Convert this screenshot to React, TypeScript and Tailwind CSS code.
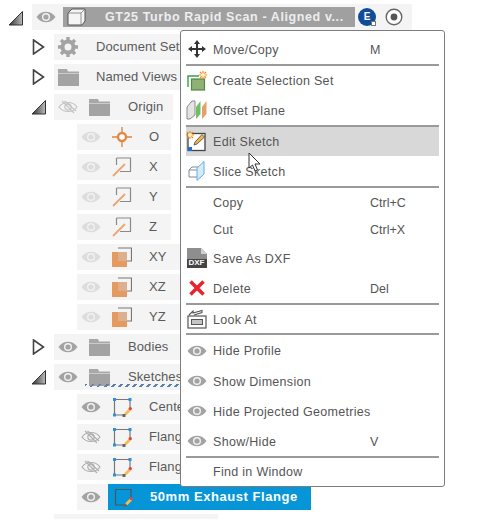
import React from "react";

const Eye = ({ c = "#a3a3a3", off = false, w = 20 }: { c?: string; off?: boolean; w?: number }) => (
  <svg width={w} height="14" viewBox="0 0 20 14" className="shrink-0">
    {off ? (
      <g fill="none" stroke={c} strokeWidth="1.2">
        <path d="M1 7 C5 1 15 1 19 7 C15 13 5 13 1 7Z" />
        <circle cx="10" cy="7" r="3.2" />
        <path d="M4 1 L16 13 M6.5 1 L18 11" />
      </g>
    ) : (
      <g>
        <path d="M0.5 7 C5 0 15 0 19.5 7 C15 14 5 14 0.5 7Z" fill={c} />
        <circle cx="10" cy="7" r="4" fill="#f2f2f2" />
        <circle cx="10" cy="7" r="2.6" fill={c} />
      </g>
    )}
  </svg>
);

const Folder = () => (
  <svg width="21" height="17" viewBox="0 0 21 17" className="shrink-0">
    <path d="M0 0 H9 L10 2.5 H21 V4 H0Z" fill="#a8a8a8" />
    <rect x="0" y="4.5" width="21" height="12.5" fill="#a3a3a3" />
  </svg>
);

const Down = () => (
  <svg width="16" height="16" viewBox="0 0 16 16" className="shrink-0">
    <defs>
      <linearGradient id="dg" x1="0" y1="0" x2="1" y2="0">
        <stop offset="0" stopColor="#333" />
        <stop offset="1" stopColor="#bbb" />
      </linearGradient>
    </defs>
    <path d="M1 15 L14.5 1.5 V15Z" fill="url(#dg)" stroke="#333" strokeWidth="1" />
  </svg>
);

const Right = () => (
  <svg width="13" height="16" viewBox="0 0 13 16" className="shrink-0">
    <path d="M1.5 1 L11.5 8 L1.5 15Z" fill="#fff" stroke="#444" strokeWidth="1.6" />
  </svg>
);

const Gear = () => (
  <svg width="20" height="20" viewBox="0 0 20 20" className="shrink-0">
    <circle cx="10" cy="10" r="5.5" fill="none" stroke="#a3a3a3" strokeWidth="4" />
    <path
      d="M10 0V20M0 10H20M3 3L17 17M17 3L3 17"
      stroke="#a3a3a3"
      strokeWidth="3.4"
      strokeDasharray="3.4 13.2"
      fill="none"
    />
  </svg>
);

const OriginPoint = () => (
  <svg width="20" height="20" viewBox="0 0 20 20" className="shrink-0">
    <path d="M10 0V20M0 10H20" stroke="#e6a06a" strokeWidth="1.8" />
    <circle cx="10" cy="10" r="4" fill="#fff" stroke="#e08a45" strokeWidth="2.4" />
  </svg>
);

const Axis = () => (
  <svg width="20" height="20" viewBox="0 0 20 20" className="shrink-0">
    <path d="M4.5 1 H18.5 V14.5 H8" fill="none" stroke="#8a8a8a" strokeWidth="1.2" />
    <path d="M4.5 1 V8" fill="none" stroke="#8a8a8a" strokeWidth="1.2" />
    <path d="M1 19 L13 7" stroke="#eba672" strokeWidth="1.8" />
  </svg>
);

const Plane = () => (
  <svg width="20" height="20" viewBox="0 0 20 20" className="shrink-0">
    <path d="M6 1 H19.5 V14 H15" fill="none" stroke="#777" strokeWidth="1.2" />
    <rect x="0" y="5" width="15" height="15" fill="#e59a5f" />
    <rect x="6" y="5" width="9" height="9" fill="#dcb08f" />
  </svg>
);

const SketchIcon = ({ pts = true }: { pts?: boolean }) => (
  <svg width="20" height="20" viewBox="0 0 20 20" className="shrink-0">
    <path d="M2.5 2.5 H18 V11 M2.5 2.5 V18 H11" fill="none" stroke={pts ? "#777" : "#47585f"} strokeWidth="1.2" />
    {pts && (
      <g fill="#2f8fe0">
        <rect x="1" y="1" width="3" height="3" />
        <rect x="16.5" y="1" width="3" height="3" />
        <rect x="1" y="16.5" width="3" height="3" />
      </g>
    )}
    <path d="M12 18 L13 15.5 L17 11.5 L19 13.5 L14.5 18Z" fill="#f5bd4f" />
    <circle cx="18.3" cy="11.6" r="1.7" fill="#e8404a" />
    <rect x="10.5" y="17" width="3" height="3" fill="#666" />
  </svg>
);

type TreeRow = {
  indent: number;
  w: number;
  arrow?: "r" | "d";
  eye: React.ReactNode;
  icon: React.ReactNode;
  label: string;
  labelX: number;
  selected?: boolean;
  underline?: boolean;
};

const dimEye = <Eye c="#dcdcdc" />;

const rows: TreeRow[] = [
  { indent: 54, w: 126, arrow: "r", eye: <Gear />, icon: null, label: "Document Settings", labelX: 96 },
  { indent: 54, w: 126, arrow: "r", eye: <Folder />, icon: null, label: "Named Views", labelX: 96 },
  { indent: 54, w: 119, arrow: "d", eye: <Eye c="#c4c4c4" off />, icon: <Folder />, label: "Origin", labelX: 127 },
  { indent: 77, w: 94, eye: dimEye, icon: <OriginPoint />, label: "O", labelX: 149 },
  { indent: 77, w: 94, eye: dimEye, icon: <Axis />, label: "X", labelX: 149 },
  { indent: 77, w: 94, eye: dimEye, icon: <Axis />, label: "Y", labelX: 149 },
  { indent: 77, w: 94, eye: dimEye, icon: <Axis />, label: "Z", labelX: 149 },
  { indent: 77, w: 103, eye: dimEye, icon: <Plane />, label: "XY", labelX: 149 },
  { indent: 77, w: 103, eye: dimEye, icon: <Plane />, label: "XZ", labelX: 149 },
  { indent: 77, w: 103, eye: dimEye, icon: <Plane />, label: "YZ", labelX: 149 },
  { indent: 54, w: 126, arrow: "r", eye: <Eye />, icon: <Folder />, label: "Bodies", labelX: 127 },
  { indent: 54, w: 126, arrow: "d", eye: <Eye />, icon: <Folder />, label: "Sketches", labelX: 127, underline: true },
  { indent: 77, w: 103, eye: <Eye />, icon: <SketchIcon />, label: "Center", labelX: 149 },
  { indent: 77, w: 103, eye: <Eye c="#b0b0b0" off />, icon: <SketchIcon />, label: "Flange", labelX: 149 },
  { indent: 77, w: 103, eye: <Eye c="#b0b0b0" off />, icon: <SketchIcon />, label: "Flange", labelX: 149 },
  { indent: 77, w: 234, eye: <Eye />, icon: <SketchIcon pts={false} />, label: "50mm Exhaust Flange", labelX: 149, selected: true },
  { indent: 54, w: 164, eye: null, icon: null, label: "", labelX: 0 },
];

const Tree = ({ r }: { r: TreeRow }) => (
  <div className="relative h-[26px] shrink-0" style={{ marginLeft: r.indent, width: r.w }}>
    {r.arrow && (
      <div className={`absolute top-[5px] ${r.arrow === "r" ? "left-[-22px]" : "left-[-23px]"}`}>
        {r.arrow === "r" ? <Right /> : <Down />}
      </div>
    )}
    <div className="flex h-full w-full items-center bg-[#f4f4f4] pl-[4px]">
      {r.eye && <div className="flex w-[20px] shrink-0 justify-center">{r.eye}</div>}
      {r.selected ? (
        <div className="ml-[7px] flex h-full flex-1 items-center bg-[#0696d7] pl-[5px]">
          {r.icon}
          <span className="ml-[17px] whitespace-nowrap text-[13px] font-bold tracking-[0.55px] text-white">{r.label}</span>
        </div>
      ) : (
        <>
          {r.icon && <div className="ml-[11px] shrink-0">{r.icon}</div>}
          <span
            className="whitespace-nowrap text-[13px] tracking-[0.1px] text-[#5a5a5a]"
            style={{ marginLeft: r.icon ? r.labelX - r.indent - 4 - 20 - 11 - 20 : r.labelX - r.indent - 4 - 20 }}
          >
            {r.label}
          </span>
        </>
      )}
    </div>
    {r.underline && (
      <div className="absolute bottom-[3px] left-[31px] h-[3px] w-[95px] bg-[repeating-linear-gradient(135deg,#5f7fa8_0_2px,transparent_2px_5px)]" />
    )}
  </div>
);

const MoveIcon = () => (
  <svg width="20" height="20" viewBox="0 0 20 20">
    <path
      d="M10 1 L13 5 H11 V9 H15 V7 L19 10 L15 13 V11 H11 V15 H13 L10 19 L7 15 H9 V11 H5 V13 L1 10 L5 7 V9 H9 V5 H7Z"
      fill="#333"
    />
  </svg>
);

const Spark = ({ x, y }: { x: number; y: number }) => (
  <g transform={`translate(${x} ${y})`}>
    <path d="M4 0V8M0 4H8M1 1L7 7M7 1L1 7" stroke="#f08a1c" strokeWidth="1.2" />
    <circle cx="4" cy="4" r="2" fill="#fff3c4" />
  </g>
);

const SelSetIcon = () => (
  <svg width="20" height="20" viewBox="0 0 20 20">
    <path d="M1 16 V5 H12" fill="none" stroke="#2fa44a" strokeWidth="1.4" />
    <rect x="4.5" y="8" width="13" height="11" fill="#8fb076" stroke="#4f8a3f" strokeWidth="1.2" />
    <Spark x={12} y={0} />
  </svg>
);

const OffsetIcon = () => (
  <svg width="21" height="20" viewBox="0 0 21 20">
    <path d="M1 7 L6 1 H9 V15 L4 19 H1Z" fill="#e4e4e4" stroke="#8a8a8a" strokeWidth="1" />
    <path d="M10 7 L14.5 1 V14 L10 19Z" fill="#6fbf63" />
    <path d="M16 7 L20.5 1 V14 L16 19Z" fill="#e3a06a" />
  </svg>
);

const EditIcon = () => (
  <svg width="21" height="21" viewBox="0 0 21 21">
    <rect x="2" y="2.5" width="17" height="17" fill="#fff" stroke="#444" strokeWidth="1.3" />
    <rect x="2" y="16" width="4" height="4" fill="#1c6fd0" />
    <path d="M8 14 L9 11 L16 3.5 L18.5 6 L11 13Z" fill="#f2b544" stroke="#444" strokeWidth="0.8" />
    <Spark x={0} y={0} />
  </svg>
);

const SliceIcon = () => (
  <svg width="20" height="20" viewBox="0 0 20 20">
    <path d="M2 9 L5 6 H14 V16 H2Z M2 9 H11 V16" fill="#fff" stroke="#7f8a98" strokeWidth="1" />
    <path d="M10 7 L17 0.5 V13 L10 19.5Z" fill="#d5ebf7" stroke="#62aede" strokeWidth="1" />
  </svg>
);

const DxfIcon = () => (
  <div className="relative h-[20px] w-[20px]">
    <svg width="20" height="20" viewBox="0 0 20 20">
      <path d="M0 0 H14 L20 6 V20 H0Z" fill="#8e8e8e" />
      <path d="M14 0 L20 6 H14Z" fill="#d0d0d0" />
      <rect x="0" y="11" width="20" height="9" fill="#444" />
    </svg>
    <span className="absolute bottom-[0px] left-[2px] text-[8px] font-bold leading-[10px] text-white">DXF</span>
  </div>
);

const DeleteIcon = () => (
  <svg width="20" height="20" viewBox="0 0 20 20">
    <path d="M3.5 3.5 L16.5 16.5 M16.5 3.5 L3.5 16.5" stroke="#e8252f" strokeWidth="3.6" />
  </svg>
);

const LookIcon = () => (
  <svg width="20" height="20" viewBox="0 0 20 20">
    <rect x="1" y="7" width="18" height="12" fill="#fff" stroke="#555" strokeWidth="1.2" />
    <rect x="4.5" y="10.5" width="11" height="5" fill="#c4c4c4" stroke="#555" strokeWidth="1" />
    <path d="M2 6 L6 2 V4 L15 1.5 V3.5 L7 6" fill="none" stroke="#555" strokeWidth="1.1" />
  </svg>
);

type Item =
  | { sep: true; h: number }
  | { sep?: false; label: string; key2?: string; icon?: React.ReactNode; h: number; active?: boolean };

const items: Item[] = [
  { label: "Move/Copy", key2: "M", icon: <MoveIcon />, h: 30 },
  { sep: true, h: 2 },
  { label: "Create Selection Set", icon: <SelSetIcon />, h: 29 },
  { label: "Offset Plane", icon: <OffsetIcon />, h: 30 },
  { label: "Edit Sketch", icon: <EditIcon />, h: 31, active: true },
  { label: "Slice Sketch", icon: <SliceIcon />, h: 30 },
  { sep: true, h: 2 },
  { label: "Copy", key2: "Ctrl+C", h: 28 },
  { label: "Cut", key2: "Ctrl+X", h: 27 },
  { label: "Save As DXF", icon: <DxfIcon />, h: 30 },
  { label: "Delete", key2: "Del", icon: <DeleteIcon />, h: 30 },
  { sep: true, h: 2 },
  { label: "Look At", icon: <LookIcon />, h: 28 },
  { sep: true, h: 2 },
  { label: "Hide Profile", icon: <Eye />, h: 31 },
  { label: "Show Dimension", icon: <Eye />, h: 30 },
  { label: "Hide Projected Geometries", icon: <Eye />, h: 30 },
  { label: "Show/Hide", key2: "V", icon: <Eye />, h: 30 },
  { sep: true, h: 2 },
  { label: "Find in Window", h: 26 },
];

const ContextMenu = () => (
  <div className="absolute left-[180px] top-[30px] flex h-[457px] w-[265px] flex-col rounded-[3px] border border-[#7d7d7d] bg-white px-[5px] py-[3px]">
    {items.map((it, i) =>
      it.sep ? (
        <div key={i} className="w-full shrink-0 bg-[#9a9a9a]" style={{ height: it.h }} />
      ) : (
        <div
          key={i}
          className={`flex shrink-0 items-center ${it.active ? "border-t-2 border-[#9a9a9a] bg-[#d8d8d8]" : ""}`}
          style={{ height: it.h }}
        >
          <div className="flex w-[21px] shrink-0 justify-center">{it.icon}</div>
          <span className="ml-[6px] w-[157px] shrink-0 whitespace-nowrap pt-[2px] text-[12.5px] tracking-[0.3px] text-[#555]">{it.label}</span>
          {it.key2 && <span className="whitespace-nowrap pt-[2px] text-[12.5px] text-[#555]">{it.key2}</span>}
        </div>
      )
    )}
  </div>
);

export default function App() {
  return (
    <div className="relative h-[519px] w-[480px] overflow-hidden bg-white font-['Liberation_Sans',sans-serif]">
      <div className="flex flex-col gap-[4px] pt-[4px]">
        <div className="relative ml-[32px] flex h-[26px] w-[380px] shrink-0 items-center bg-[#f4f4f4] pl-[4px]">
          <div className="absolute left-[-24px] top-[6px]">
            <Down />
          </div>
          <Eye />
          <div className="ml-[7px] flex h-[20px] w-[292px] shrink-0 items-center bg-[#a0a0a0] pl-[4px]">
            <svg width="20" height="18" viewBox="0 0 20 18" className="shrink-0">
              <path d="M1 5 L5 1 H18 V13 L15 17 H1Z" fill="#f5f5f5" stroke="#555" strokeWidth="1" />
              <path d="M1 5 H14 V17 M14 5 L18 1" fill="none" stroke="#777" strokeWidth="0.8" />
            </svg>
            <span className="ml-[18px] whitespace-nowrap text-[12.5px] font-bold tracking-[0.6px] text-[#eeeeee]">
              GT25 Turbo Rapid Scan - Aligned v...
            </span>
          </div>
          <div className="relative ml-[3px] flex h-[18px] w-[18px] shrink-0 items-center justify-center rounded-full bg-[#0f4c9a]">
            <span className="text-[10px] font-bold leading-none text-white">E</span>
            <div className="absolute bottom-[0px] right-[0px] h-[5px] w-[5px] border border-[#777] bg-white" />
          </div>
          <svg width="18" height="18" viewBox="0 0 18 18" className="ml-[9px] shrink-0">
            <circle cx="9" cy="9" r="7.8" fill="#fff" stroke="#666" strokeWidth="1.4" />
            <circle cx="9" cy="9" r="3.4" fill="#555" />
          </svg>
        </div>
        {rows.map((r, i) => (
          <Tree key={i} r={r} />
        ))}
      </div>
      <ContextMenu />
      <svg width="14" height="22" viewBox="0 0 14 22" className="absolute left-[248px] top-[152px]">
        <path d="M1 1 V16 L4.5 13 L7 19 L9.5 18 L7 12 H12Z" fill="#fff" stroke="#333" strokeWidth="1" />
      </svg>
    </div>
  );
}
